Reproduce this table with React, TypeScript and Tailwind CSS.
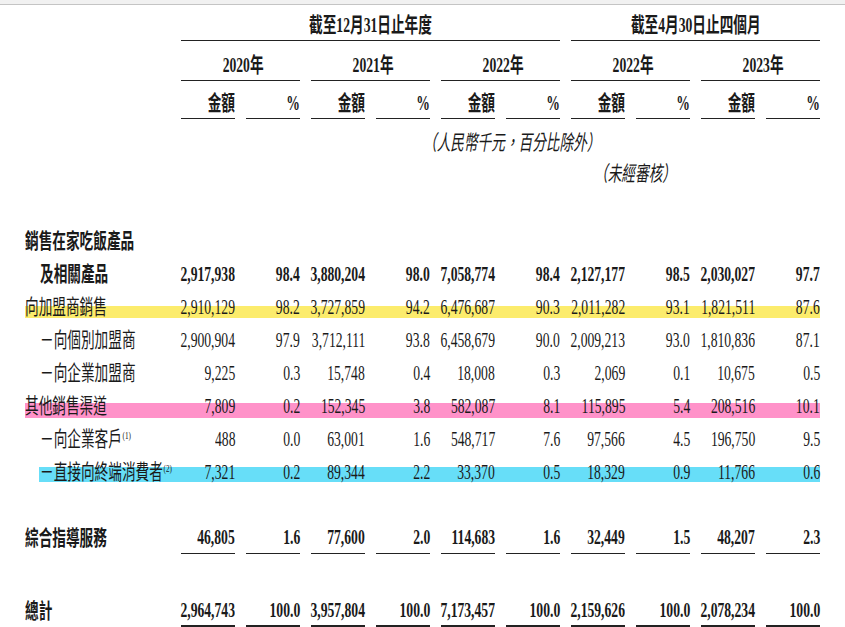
import React from 'react'

// Columns: label, then five periods of (amount, %)
const GRID = 'grid w-[795px] grid-cols-[145px_repeat(10,54px)] gap-x-[11px]'
const FONT = "font-['Liberation_Serif','Noto_Sans_CJK_TC',serif]"

type Align = 'left' | 'right' | 'center'

// The source table is set in a condensed face, so every text run is squeezed horizontally
function T({
  children,
  align = 'right',
  className = '',
}: {
  children: React.ReactNode
  align?: Align
  className?: string
}) {
  const origin = align === 'left' ? 'origin-left' : align === 'center' ? 'origin-center' : 'origin-right'
  return (
    <span className={`inline-block whitespace-nowrap scale-x-[0.65] text-[21px] leading-[24px] ${origin} ${className}`}>
      {children}
    </span>
  )
}

interface Row {
  label: string
  sup?: string
  bold?: boolean
  indent?: boolean
  band?: string
  values?: string[]
}

const rows: Row[] = [
  { label: '銷售在家吃飯產品', bold: true },
  {
    label: '及相關產品',
    bold: true,
    indent: true,
    values: ['2,917,938', '98.4', '3,880,204', '98.0', '7,058,774', '98.4', '2,127,177', '98.5', '2,030,027', '97.7'],
  },
  {
    label: '向加盟商銷售',
    band: 'bg-[linear-gradient(#fcec6c,#fcec6c)] bg-no-repeat bg-[length:100%_12px] bg-[position:0_16px]',
    values: ['2,910,129', '98.2', '3,727,859', '94.2', '6,476,687', '90.3', '2,011,282', '93.1', '1,821,511', '87.6'],
  },
  {
    label: '－向個別加盟商',
    indent: true,
    values: ['2,900,904', '97.9', '3,712,111', '93.8', '6,458,679', '90.0', '2,009,213', '93.0', '1,810,836', '87.1'],
  },
  {
    label: '－向企業加盟商',
    indent: true,
    values: ['9,225', '0.3', '15,748', '0.4', '18,008', '0.3', '2,069', '0.1', '10,675', '0.5'],
  },
  {
    label: '其他銷售渠道',
    band: 'bg-[linear-gradient(#ff92c9,#ff92c9)] bg-no-repeat bg-[length:100%_15px] bg-[position:0_14px]',
    values: ['7,809', '0.2', '152,345', '3.8', '582,087', '8.1', '115,895', '5.4', '208,516', '10.1'],
  },
  {
    label: '－向企業客戶',
    sup: '(1)',
    indent: true,
    values: ['488', '0.0', '63,001', '1.6', '548,717', '7.6', '97,566', '4.5', '196,750', '9.5'],
  },
  {
    label: '－直接向終端消費者',
    sup: '(2)',
    indent: true,
    band: 'bg-[linear-gradient(#67def8,#67def8)] bg-no-repeat bg-[length:781px_15px] bg-[position:14px_12px]',
    values: ['7,321', '0.2', '89,344', '2.2', '33,370', '0.5', '18,329', '0.9', '11,766', '0.6'],
  },
]

const guidance = ['46,805', '1.6', '77,600', '2.0', '114,683', '1.6', '32,449', '1.5', '48,207', '2.3']
const total = ['2,964,743', '100.0', '3,957,804', '100.0', '7,173,457', '100.0', '2,159,626', '100.0', '2,078,234', '100.0']

const years = ['2020年', '2021年', '2022年', '2022年', '2023年']

function BodyRow({ row }: { row: Row }) {
  return (
    <div className={`${GRID} h-[33px] ${row.band ?? ''}`}>
      <div className={`flex items-center ${row.indent ? 'pl-[15px]' : ''}`}>
        <T align="left" className={row.bold ? 'font-bold' : ''}>
          {row.label}
          {row.sup && <sup className="text-[11px] top-[-7px] ml-[1px]">{row.sup}</sup>}
        </T>
      </div>
      {row.values?.map((v, i) => (
        <div key={i} className="flex items-center justify-end">
          <T className={row.bold ? 'font-bold' : ''}>{v}</T>
        </div>
      ))}
    </div>
  )
}

function SummaryRow({ label, values, heavy }: { label: string; values: string[]; heavy?: boolean }) {
  const line = heavy ? 'border-b-[3px] h-[34px]' : 'border-b h-[33px]'
  return (
    <div className={GRID}>
      <div className="flex items-center">
        <T align="left" className="font-bold">
          {label}
        </T>
      </div>
      {values.map((v, i) => (
        <div key={i} className={`flex items-center justify-end border-[#222] ${line}`}>
          <T className="font-bold">{v}</T>
        </div>
      ))}
    </div>
  )
}

export default function App() {
  return (
    <div className={`w-[845px] h-[627px] overflow-hidden bg-white text-[#1a1a1a] ${FONT}`}>
      <div className="h-[5px] bg-[#f1f1f1] border-b border-[#c4c4c4]" />

      <div className="pl-[25px]">
        {/* period headings */}
        <div className={GRID}>
          <div className="col-start-2 col-span-6 h-[36px] pt-[4px] flex items-center justify-center border-b border-[#222]">
            <T align="center" className="font-bold">截至12月31日止年度</T>
          </div>
          <div className="col-span-4 h-[36px] pt-[4px] flex items-center justify-center border-b border-[#222]">
            <T align="center" className="font-bold">截至4月30日止四個月</T>
          </div>
        </div>

        <div className={GRID}>
          <div />
          {years.map((y, i) => (
            <div key={i} className="col-span-2 h-[40px] pt-[8px] flex items-center justify-center border-b border-[#222]">
              <T align="center" className="font-bold pl-[8px]">{y}</T>
            </div>
          ))}
        </div>

        <div className={GRID}>
          <div />
          {years.flatMap((_, i) => [
            <div key={`a${i}`} className="h-[38px] pt-[6px] flex items-center justify-end border-b border-[#222]">
              <T className="font-bold">金額</T>
            </div>,
            <div key={`p${i}`} className="h-[38px] pt-[6px] flex items-center justify-end border-b border-[#222]">
              <T className="font-bold">%</T>
            </div>,
          ])}
        </div>

        {/* notes */}
        <div className="h-[48px] flex items-center pl-[398px]">
          <T align="left" className="italic">（人民幣千元，百分比除外）</T>
        </div>
        <div className={GRID}>
          <div className="col-start-8 col-span-2 h-[14px] flex items-center justify-center pl-[8px]">
            <T align="center" className="italic">（未經審核）</T>
          </div>
        </div>

        <div className="h-[43px]" />

        {rows.map((r, i) => (
          <BodyRow key={i} row={r} />
        ))}

        <div className="h-[33px]" />
        <SummaryRow label="綜合指導服務" values={guidance} />
        <div className="h-[40px]" />
        <SummaryRow label="總計" values={total} heavy />
      </div>
    </div>
  )
}
